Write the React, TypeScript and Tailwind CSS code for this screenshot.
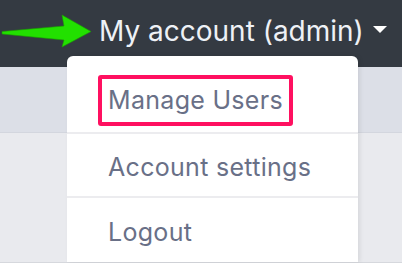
import type { ReactNode } from "react";

const font = { fontFamily: "Inter, 'Noto Sans', sans-serif" };

function GreenArrow() {
  return (
    <svg width="92" height="34" viewBox="0 12 92 34" className="shrink-0">
      <polygon
        points="2,29.5 2,32 64,38 62,45 91,29.5 62,13 64,24"
        fill="#22e000"
        stroke="#1aa000"
        strokeWidth="0.6"
        strokeLinejoin="round"
      />
    </svg>
  );
}

function MenuItem({ children, first, last }: { children: ReactNode; first?: boolean; last?: boolean }) {
  return (
    <div
      className={
        (first ? "h-[68px] pt-[2px] " : "h-[64px] pt-[6px] ") +
        (last ? "" : "border-b-2 border-[#ececef] ") +
        "flex items-center whitespace-nowrap px-[41px] text-[25px] tracking-[0.3px] text-[#697087]"
      }
    >
      {children}
    </div>
  );
}

export default function App() {
  return (
    <div className="relative flex h-[263px] w-[402px] flex-col overflow-hidden" style={font}>
      {/* top bar */}
      <header className="flex h-[67px] shrink-0 items-center whitespace-nowrap bg-[#343a42] pb-[6px]">
        <GreenArrow />
        <span className="ml-[7px] text-[28px] leading-none text-[#eef1f6]">My account (admin)</span>
        <span className="ml-[9px] mt-[-2px] h-0 w-0 border-x-[7px] border-t-[7px] border-x-transparent border-t-white" />
      </header>

      {/* page behind */}
      <div className="h-[66px] shrink-0 border-b border-[#d3d6de] bg-[#dcdfe7]" />
      <div className="flex-1 border-b border-[#d6d8dd] bg-[#e9eaee]" />

      {/* dropdown menu */}
      <div className="absolute left-[67px] top-[56px] w-[291px] rounded-t-[6px] bg-white pt-[10px] shadow-[2px_0_4px_rgba(0,0,0,0.08)]">
        <MenuItem first>
          <span className="-mx-[10px] rounded-[3px] border-4 border-[#ff1060] px-[6px] py-[9px] leading-none">
            Manage Users
          </span>
        </MenuItem>
        <MenuItem>Account settings</MenuItem>
        <MenuItem last>Logout</MenuItem>
      </div>
    </div>
  );
}
